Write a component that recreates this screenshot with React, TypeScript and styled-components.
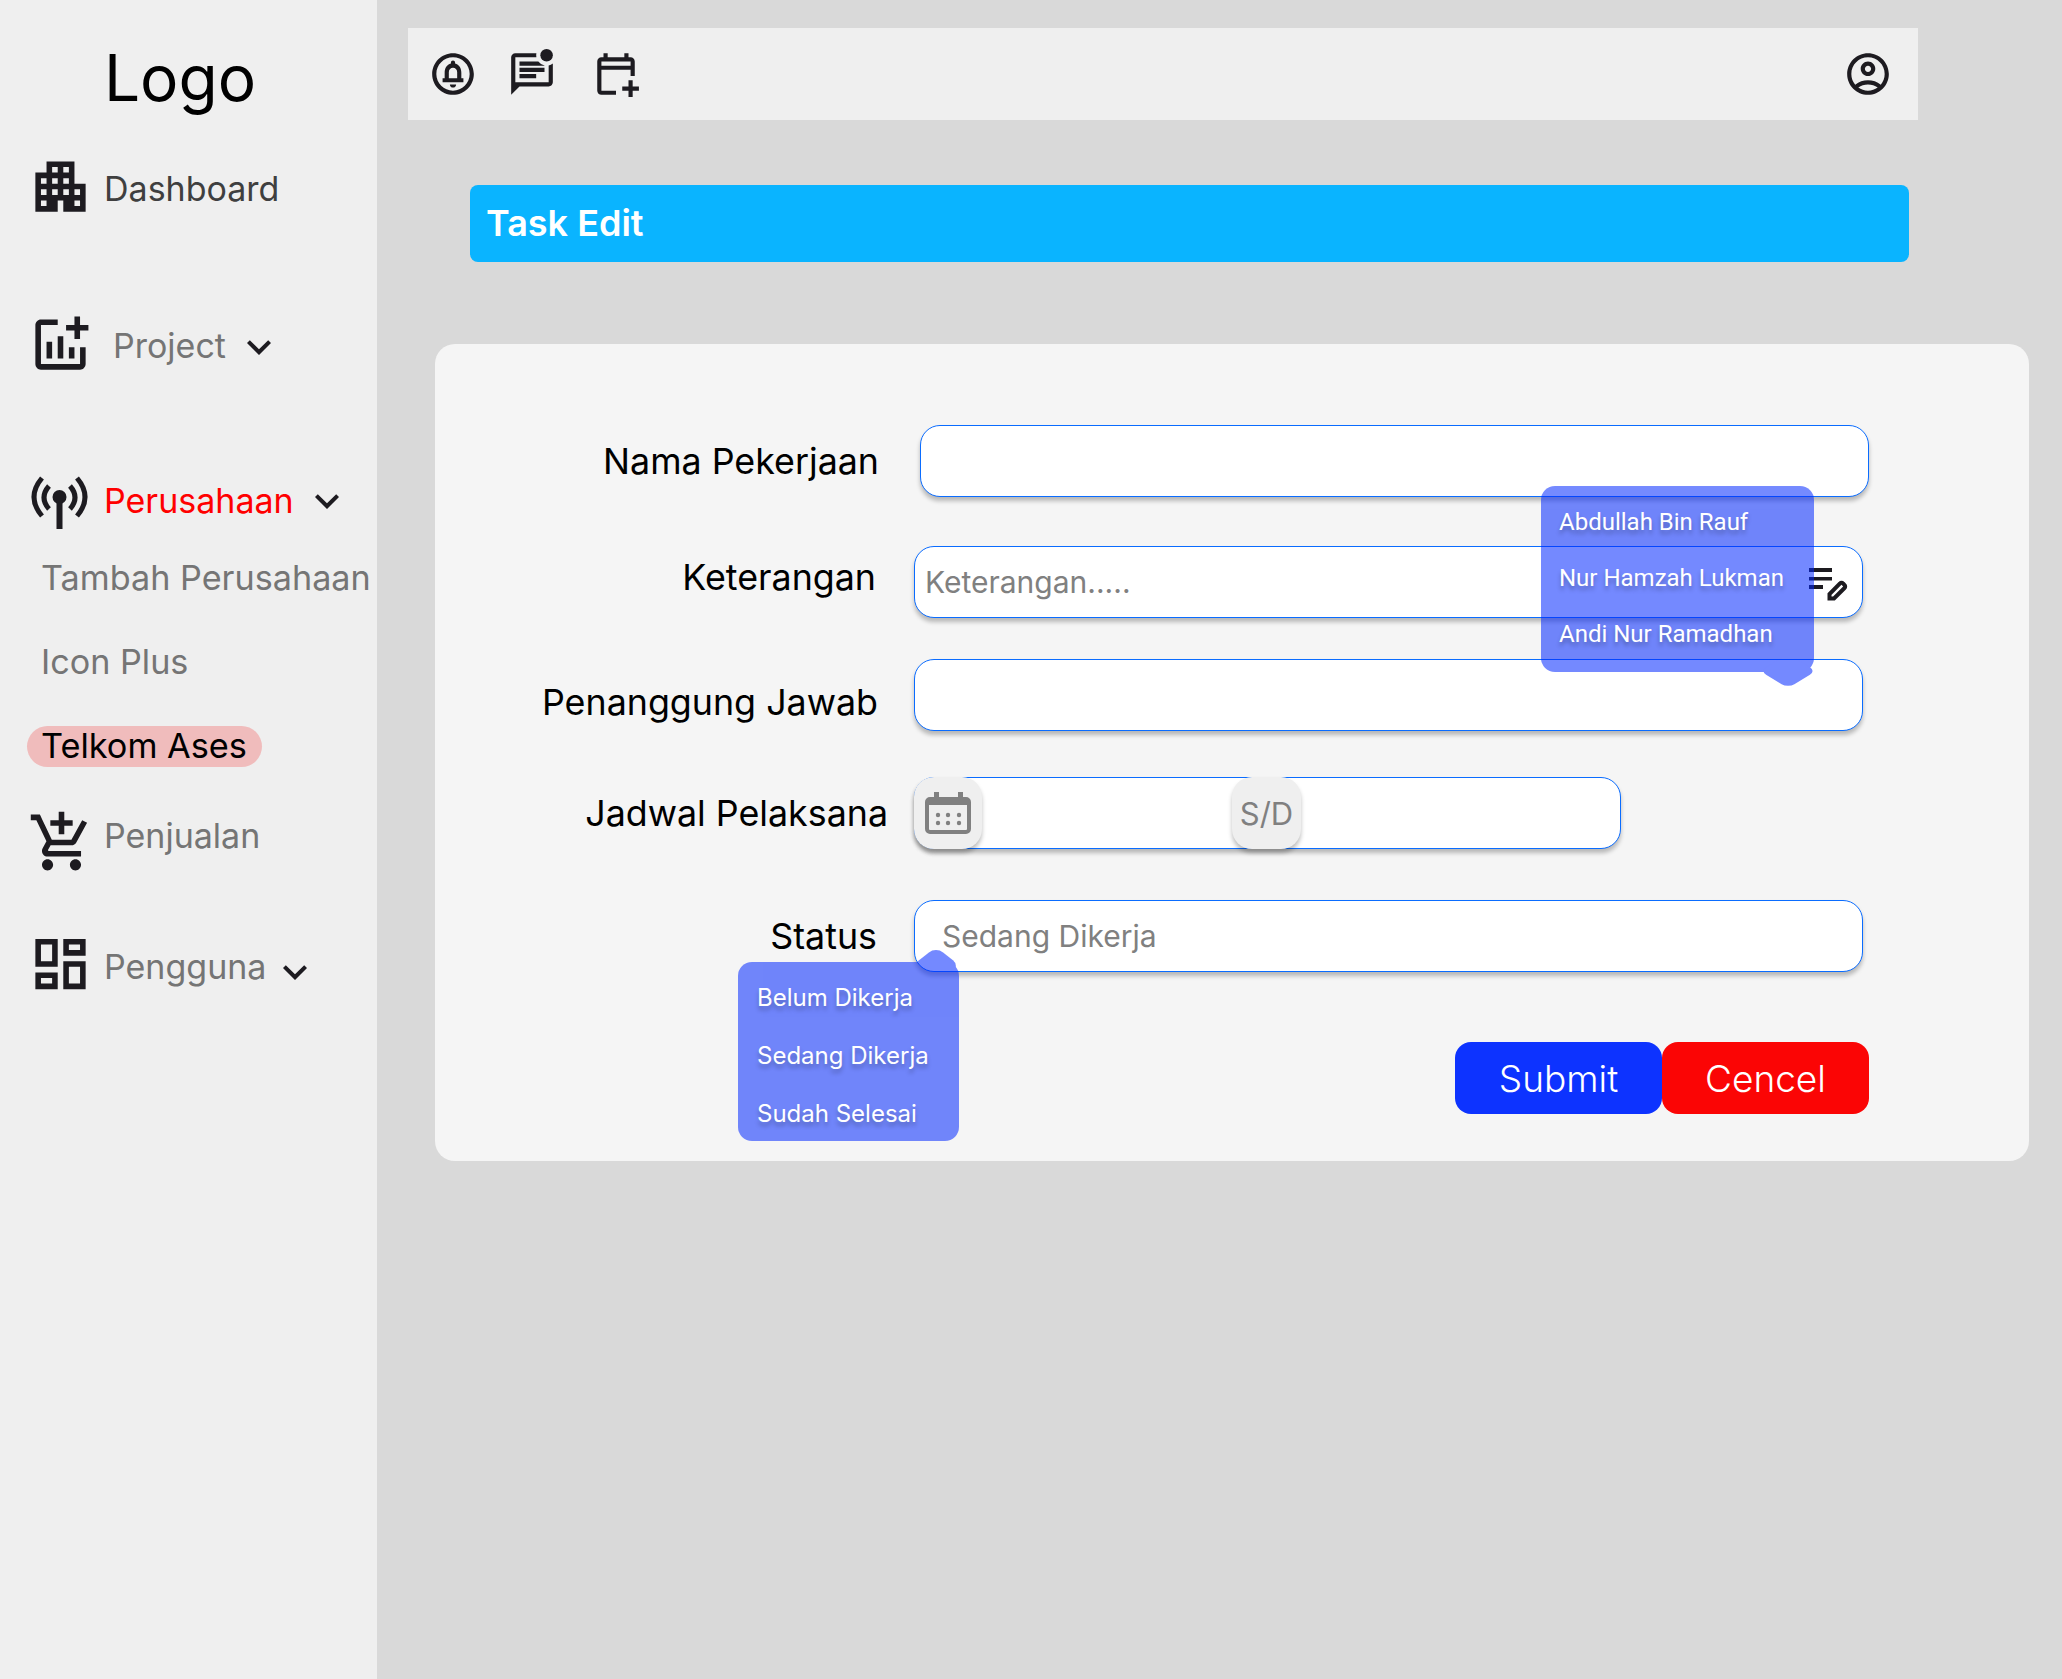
import React from "react"
import styled, { createGlobalStyle } from "styled-components"
import {
  MdApartment,
  MdAddchart,
  MdAddShoppingCart,
  MdOutlineDashboard,
  MdKeyboardArrowDown,
  MdOutlineCircleNotifications,
  MdOutlineMarkUnreadChatAlt,
  MdOutlineAccountCircle,
} from "react-icons/md"

const GlobalStyle = createGlobalStyle`
  body {
    margin: 0;
    background: #d9d9d9;
    font-family: "Inter", "Liberation Sans", sans-serif;
  }
`

// Material calendar_add_on isn't in the icon pack
const CalendarAdd = () => (
  <svg width="50" height="50" viewBox="0 0 24 24" fill="#1d1b20">
    <path d="M19 4h-1V2h-2v2H8V2H6v2H5c-1.1 0-2 .9-2 2v14c0 1.1.9 2 2 2h7v-2H5V10h14v3h2V6c0-1.1-.9-2-2-2zM5 8V6h14v2H5zm13 7v3h-3v2h3v3h2v-3h3v-2h-3v-3h-2z" />
  </svg>
)

// Antenna: a pole with two arcs on each side
const Antenna = () => (
  <svg width="67" height="67" viewBox="0 0 67 67" fill="none" stroke="#1d1b20" strokeWidth="5">
    <path d="M23 19Q13 30.5 23 42M16 11Q0 30 16 49M44 19Q54 30.5 44 42M51 11Q67 30 51 49" />
    <circle cx="33.5" cy="30" r="7" fill="#1d1b20" stroke="none" />
    <rect x="30.5" y="30" width="6" height="32" fill="#1d1b20" stroke="none" />
  </svg>
)

const NoteEdit = () => (
  <svg width="46" height="46" viewBox="0 0 46 46" fill="#1d1b20">
    <rect x="3" y="6" width="23" height="4" />
    <rect x="3" y="15" width="23" height="3.5" />
    <rect x="3" y="23" width="14" height="4" />
    <path
      d="M23.5 36.5v-4.5L34 21.5a2 2 0 0 1 3 0l1.5 1.5a2 2 0 0 1 0 3L28 36.5z"
      fill="none"
      stroke="#1d1b20"
      strokeWidth="4"
    />
  </svg>
)

const CalendarGrid = () => (
  <svg width="46" height="42" viewBox="0 0 46 42" fill="#808080">
    <rect x="2" y="7" width="42" height="33" rx="3" fill="none" stroke="#808080" strokeWidth="4" />
    <rect x="2" y="7" width="42" height="6" />
    <rect x="9" y="0" width="5" height="8" />
    <rect x="33" y="0" width="5" height="8" />
    {[13, 23, 34].map(x => (
      <React.Fragment key={x}>
        <circle cx={x} cy="23" r="2.2" />
        <circle cx={x} cy="31" r="2.2" />
      </React.Fragment>
    ))}
  </svg>
)

const App = () => {
  return (
    <Page>
      <GlobalStyle />
      <Sidebar>
        <Logo>Logo</Logo>
        <NavRow $top={37}>
          <NavIcon><MdApartment size={67} /></NavIcon>
          <NavText $color="#3f3f3f" $gap={10} $shift={4}>Dashboard</NavText>
        </NavRow>
        <NavRow $top={91}>
          <NavIcon><MdAddchart size={67} /></NavIcon>
          <NavText $color="#757575" $gap={19} $shift={2}>Project</NavText>
          <Chevron $shift={4}><MdKeyboardArrowDown size={48} /></Chevron>
        </NavRow>
        <NavRow $top={89}>
          <NavIcon $left={-1}><Antenna /></NavIcon>
          <NavText $color="#ff0000" $gap={11}>Perusahaan</NavText>
          <Chevron><MdKeyboardArrowDown size={48} /></Chevron>
        </NavRow>
        <SubLink $top={23}>Tambah Perusahaan</SubLink>
        <SubLink $top={42}>Icon Plus</SubLink>
        <ActiveLink>Telkom Ases</ActiveLink>
        <NavRow $top={42}>
          <NavIcon $left={1}><MdAddShoppingCart size={67} /></NavIcon>
          <NavText $color="#757575" $gap={9} $shift={-14}>Penjualan</NavText>
        </NavRow>
        <NavRow $top={54}>
          <NavIcon><MdOutlineDashboard size={68} /></NavIcon>
          <NavText $color="#757575" $gap={10} $shift={5}>Pengguna</NavText>
          <Chevron $shift={16} $gap={5}><MdKeyboardArrowDown size={48} /></Chevron>
        </NavRow>
      </Sidebar>

      <Main>
        <TopBar>
          <TopIcons>
            <MdOutlineCircleNotifications size={50} color="#1d1b20" />
            <MdOutlineMarkUnreadChatAlt size={50} color="#1d1b20" />
            <CalendarAdd />
          </TopIcons>
          <MdOutlineAccountCircle size={50} color="#1d1b20" />
        </TopBar>

        <TitleBar>Task Edit</TitleBar>

        <Card>
          <FormRow>
            <Label $width={444}>Nama Pekerjaan</Label>
            <TextField $start={41} $width={949} />
          </FormRow>
          <FormRow $top={49}>
            <Label $width={441} $shift={-10}>Keterangan</Label>
            <FieldWrap $start={38} $width={949}>
              <TextField $width={949} placeholder="Keterangan....." />
              <FieldIcon><NoteEdit /></FieldIcon>
            </FieldWrap>
          </FormRow>
          <FormRow $top={41}>
            <Label $width={443} $shift={14}>Penanggung Jawab</Label>
            <TextField $start={36} $width={949} />
          </FormRow>
          <FormRow $top={46}>
            <Label $width={453}>Jadwal Pelaksana</Label>
            <DateField $start={26}>
              <DateCap $width={68}><CalendarGrid /></DateCap>
              <DateCap $width={69} $start={250}>S/D</DateCap>
            </DateField>
          </FormRow>
          <FormRow $top={51}>
            <Label $width={442}>Status</Label>
            <TextField $start={37} $width={949} $pad={27} placeholder="Sedang Dikerja" />
          </FormRow>
          <Actions>
            <ActionButton $bg="#0d33ff">Submit</ActionButton>
            <ActionButton $bg="#fb0505">Cencel</ActionButton>
          </Actions>

          <AssigneeMenu>
            <MenuFill $nub="bottom" />
            <MenuItem $row={56} $pad={18} $face="Roboto">Abdullah Bin Rauf</MenuItem>
            <MenuItem $row={56} $pad={18} $face="Roboto">Nur Hamzah Lukman</MenuItem>
            <MenuItem $row={56} $pad={18} $face="Roboto">Andi Nur Ramadhan</MenuItem>
          </AssigneeMenu>
          <StatusMenu>
            <MenuFill $nub="top" />
            <MenuItem $row={58} $pad={19}>Belum Dikerja</MenuItem>
            <MenuItem $row={58} $pad={19}>Sedang Dikerja</MenuItem>
            <MenuItem $row={58} $pad={19}>Sudah Selesai</MenuItem>
          </StatusMenu>
        </Card>
      </Main>
    </Page>
  )
}

const Page = styled.div`
  display: flex;
  min-height: 100vh;
  background: #d9d9d9;
`

const Sidebar = styled.aside`
  width: 377px;
  flex-shrink: 0;
  box-sizing: border-box;
  padding: 39px 0 0 27px;
  background: #efefef;
`

const Logo = styled.div`
  width: 306px;
  text-align: center;
  font-size: 64px;
  line-height: 77px;
  color: #000;
`

const NavRow = styled.div<{ $top: number }>`
  display: flex;
  align-items: center;
  height: 67px;
  margin-top: ${p => p.$top}px;
  color: #1d1b20;
`

const NavIcon = styled.span<{ $left?: number }>`
  display: flex;
  justify-content: center;
  width: 67px;
  margin-left: ${p => p.$left || 0}px;
`

const NavText = styled.span<{ $color: string; $gap: number; $shift?: number }>`
  margin: ${p => p.$shift || 0}px 0 0 ${p => p.$gap}px;
  font-size: 34px;
  color: ${p => p.$color};
`

const Chevron = styled.span<{ $shift?: number; $gap?: number }>`
  display: flex;
  margin: ${p => p.$shift || 0}px 0 0 ${p => p.$gap || 9}px;
`

const SubLink = styled.div<{ $top: number }>`
  margin: ${p => p.$top}px 0 0 14px;
  font-size: 34.2px;
  line-height: 42px;
  white-space: nowrap;
  color: #757575;
`

const ActiveLink = styled.div`
  width: fit-content;
  margin: 43px 0 0;
  padding: 0 15px 0 14px;
  border-radius: 21px;
  background: #f0bcbc;
  font-size: 34.3px;
  line-height: 40px;
  height: 41px;
  color: #000;
`

const Main = styled.main`
  flex: 1;
  padding: 28px 0 0 31px;
`

const TopBar = styled.div`
  display: flex;
  align-items: center;
  justify-content: space-between;
  width: 1510px;
  height: 92px;
  box-sizing: border-box;
  padding: 0 25px 0 20px;
  background: #efefef;
`

const TopIcons = styled.div`
  display: flex;
  align-items: center;
  gap: 29px;
  svg:last-child {
    margin-left: 5px;
  }
`

const TitleBar = styled.div`
  width: 1439px;
  height: 77px;
  box-sizing: border-box;
  margin: 65px 0 0 62px;
  padding-left: 16px;
  border-radius: 8px;
  background: #0ab4ff;
  font-size: 36px;
  font-weight: 600;
  line-height: 77px;
  color: #fff;
`

const Card = styled.section`
  position: relative;
  width: 1594px;
  height: 817px;
  box-sizing: border-box;
  margin: 82px 0 0 27px;
  padding-top: 81px;
  border-radius: 20px;
  background: #f5f5f5;
`

const FormRow = styled.div<{ $top?: number }>`
  display: flex;
  align-items: center;
  height: 72px;
  margin-top: ${p => p.$top || 0}px;
`

const Label = styled.label<{ $width: number; $shift?: number }>`
  flex-shrink: 0;
  width: ${p => p.$width}px;
  margin-top: ${p => p.$shift || 0}px;
  text-align: right;
  font-size: 35.8px;
  color: #000;
`

const TextField = styled.input<{ $start?: number; $width: number; $pad?: number }>`
  width: ${p => p.$width}px;
  height: 72px;
  box-sizing: border-box;
  margin-left: ${p => p.$start || 0}px;
  padding: 0 ${p => p.$pad || 10}px;
  border: 1px solid #0a6cff;
  border-radius: 20px;
  outline: none;
  background: #fff;
  box-shadow: 0 4px 4px rgba(0, 0, 0, 0.25);
  font-family: inherit;
  font-size: 30px;
  &::placeholder {
    color: #808080;
    opacity: 1;
  }
`

const FieldWrap = styled.div<{ $start: number; $width: number }>`
  position: relative;
  width: ${p => p.$width}px;
  margin-left: ${p => p.$start}px;
`

const FieldIcon = styled.span`
  position: absolute;
  top: 16px;
  right: 11px;
  display: flex;
`

const DateField = styled.div<{ $start: number }>`
  display: flex;
  width: 707px;
  height: 72px;
  box-sizing: border-box;
  margin-left: ${p => p.$start}px;
  border: 1px solid #0a6cff;
  border-radius: 20px;
  background: #fff;
  box-shadow: 0 4px 4px rgba(0, 0, 0, 0.25);
`

const DateCap = styled.div<{ $width: number; $start?: number }>`
  display: flex;
  align-items: center;
  justify-content: center;
  flex-shrink: 0;
  width: ${p => p.$width}px;
  height: 72px;
  margin: -1px 0 0 ${p => p.$start || -1}px;
  border-radius: 20px;
  background: #efefef;
  box-shadow: 0 4px 4px rgba(0, 0, 0, 0.25);
  font-size: 31px;
  color: #808080;
`

const Actions = styled.div`
  display: flex;
  justify-content: flex-end;
  width: 1434px;
  margin-top: 70px;
`

const ActionButton = styled.button<{ $bg: string }>`
  width: 207px;
  height: 72px;
  border: none;
  border-radius: 16px;
  background: ${p => p.$bg};
  font-family: inherit;
  font-size: 37px;
  font-weight: 300;
  color: #fff;
`

const DropMenu = styled.div`
  position: absolute;
  display: flex;
  flex-direction: column;
  box-sizing: border-box;
`

const AssigneeMenu = styled(DropMenu)`
  left: 1106px;
  top: 142px;
  width: 273px;
  height: 186px;
  padding-top: 8px;
`

const StatusMenu = styled(DropMenu)`
  left: 303px;
  top: 618px;
  width: 221px;
  height: 179px;
  padding-top: 7px;
`

const MenuFill = styled.span<{ $nub: "top" | "bottom" }>`
  position: absolute;
  inset: 0;
  border-radius: 14px;
  background: #0026ff;
  opacity: 0.54;
  &::after {
    content: "";
    position: absolute;
    background: #0026ff;
    ${p =>
      p.$nub === "bottom"
        ? `width: 40px; height: 40px; right: 6px; bottom: -19px; border-radius: 9px; transform: scaleY(0.6) rotate(45deg);`
        : `width: 34px; height: 34px; right: 6px; top: -13px; border-radius: 10px; transform: scaleY(0.8) rotate(45deg);`}
  }
`

const MenuItem = styled.div<{ $row: number; $pad: number; $face?: string }>`
  position: relative;
  height: ${p => p.$row}px;
  padding-left: ${p => p.$pad}px;
  font-family: ${p => p.$face || "Inter"}, "Liberation Sans", sans-serif;
  font-size: 24px;
  line-height: ${p => p.$row}px;
  white-space: nowrap;
  color: #fff;
  text-shadow: 0 4px 4px rgba(0, 0, 0, 0.25);
`

export default App
